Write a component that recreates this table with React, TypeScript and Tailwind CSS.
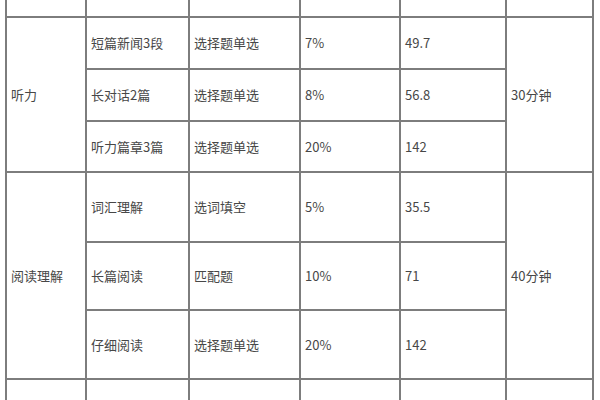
import React from "react";

type Cell = { text: string; span?: boolean };

const blank: Cell[] = [{ text: "" }, { text: "" }, { text: "" }, { text: "" }, { text: "" }, { text: "" }];

const rows: Cell[][] = [
  blank,
  [
    { text: "听力", span: true },
    { text: "短篇新闻3段" },
    { text: "选择题单选" },
    { text: "7%" },
    { text: "49.7" },
    { text: "30分钟", span: true },
  ],
  [{ text: "长对话2篇" }, { text: "选择题单选" }, { text: "8%" }, { text: "56.8" }],
  [{ text: "听力篇章3篇" }, { text: "选择题单选" }, { text: "20%" }, { text: "142" }],
  [
    { text: "阅读理解", span: true },
    { text: "词汇理解" },
    { text: "选词填空" },
    { text: "5%" },
    { text: "35.5" },
    { text: "40分钟", span: true },
  ],
  [{ text: "长篇阅读" }, { text: "匹配题" }, { text: "10%" }, { text: "71" }],
  [{ text: "仔细阅读" }, { text: "选择题单选" }, { text: "20%" }, { text: "142" }],
  blank,
];

export default function App() {
  return (
    <div className="h-[400px] w-[600px] overflow-hidden bg-white">
      <div className="ml-[5px] w-[589px] bg-[#7d7d7d] px-[2px]">
        {/* table grid: 2px gaps act as the ruled lines */}
        <div className="grid grid-cols-[78px_101px_109px_98px_104px_85px] grid-rows-[16px_50px_50px_49px_68px_66px_67px_64px] gap-[2px]">
          {rows.map((row, i) =>
            row.map((cell, j) => (
              <div
                key={`${i}-${j}`}
                className={`flex items-center bg-white pl-[4px] text-[13px] text-[#474747] [font-family:'Noto_Sans_CJK_SC','Noto_Sans',sans-serif] ${
                  cell.span ? "row-span-3" : ""
                }`}
              >
                {cell.text}
              </div>
            ))
          )}
        </div>
      </div>
    </div>
  );
}
